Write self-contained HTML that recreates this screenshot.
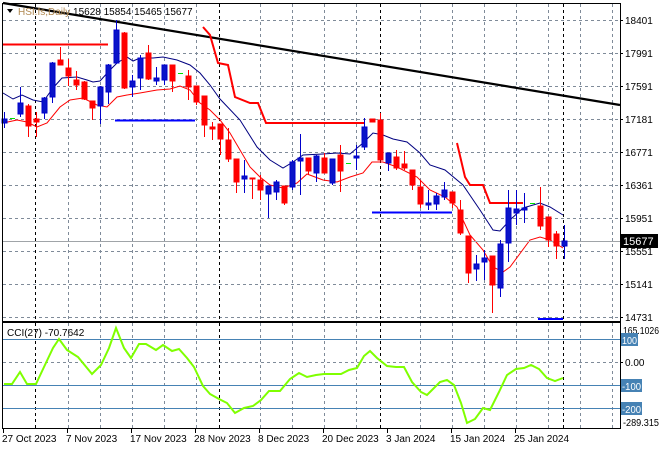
<!DOCTYPE html>
<html><head><meta charset="utf-8"><style>
html,body{margin:0;padding:0;background:#fff;}
svg{display:block;font-family:"Liberation Sans",Tahoma,sans-serif;}
</style></head><body>
<svg width="660" height="450" viewBox="0 0 660 450" xmlns="http://www.w3.org/2000/svg">
<rect width="660" height="450" fill="#fff"/>
<g stroke="#7f8b99" stroke-width="1" stroke-dasharray="3,3" fill="none">
<path d="M3 20.5H620M3 53.5H620M3 86.5H620M3 119.5H620M3 152.5H620M3 185.5H620M3 218.5H620M3 251.5H620M3 284.5H620M3 317.5H620"/>
<path d="M68.5 4V321M100.5 4V321M132.5 4V321M164.5 4V321M196.5 4V321M260.5 4V321M292.5 4V321M324.5 4V321M356.5 4V321M420.5 4V321M452.5 4V321M484.5 4V321M516.5 4V321M548.5 4V321M580.5 4V321M612.5 4V321"/>
<path d="M68.5 323V428M100.5 323V428M132.5 323V428M164.5 323V428M196.5 323V428M260.5 323V428M292.5 323V428M324.5 323V428M356.5 323V428M420.5 323V428M452.5 323V428M484.5 323V428M516.5 323V428M548.5 323V428M580.5 323V428M612.5 323V428"/>
<path d="M3 362.5H620"/>
</g>
<g stroke="#000" stroke-width="1" stroke-dasharray="3,3">
<path d="M35.5 4V321M219.5 4V321M380.5 4V321M563.5 4V321M35.5 323V428M219.5 323V428M380.5 323V428M563.5 323V428"/>
</g>
<path d="M3 3L620 105" stroke="#000" stroke-width="2.2"/>
<path d="M3 44.5H108" stroke="#ff0000" stroke-width="2"/>
<path d="M115 120.5H195M372 212.5H452M538 319H563" stroke="#0000ff" stroke-width="2"/>
<path d="M203 27L210 35L218 63L228 65L235 97L250 103L258 103L266 123L365 123" stroke="#ff0000" stroke-width="2" fill="none"/>
<path d="M457 143L465 177L470 185L483 185L490 203L523 203" stroke="#ff0000" stroke-width="2" fill="none"/>
<polyline fill="none" stroke="#000080" stroke-width="1" points="3,93 13,99 22,95 33,100 43,102 53,88 62,78 77,77 87,80 93,82 100,81 110,70 117,63 127,57 133,61 140,58 153,58 163,57 177,60 190,65 200,73 210,85 220,99 240,120 257,147 270,160 283,168 293,162 303,155 323,154 337,153 350,154 363,143 373,133 383,135 393,139 407,142 420,153 430,165 445,170 463,185 480,210 493,230 500,231 510,220 523,208 540,203 550,207 563,215"/>
<polyline fill="none" stroke="#ff0000" stroke-width="1" points="3,123 17,120 27,122 37,127 47,123 60,107 70,100 83,98 97,105 107,107 117,97 127,95 140,93 157,90 170,89 180,86 190,90 200,103 210,110 220,120 230,133 240,150 250,167 260,177 270,185 283,188 297,183 307,174 323,180 337,182 350,177 363,173 372,162 383,162 397,167 417,177 430,190 445,197 457,207 470,235 483,250 493,267 503,272 510,267 530,240 540,237 550,240 563,248"/>
<path d="M3 241.5H620" stroke="#a0a4a8" stroke-width="1"/>
<g stroke-width="1">
<g stroke="#0000cc" fill="#0a14c8">
<path d="M4.5 112V128M20.5 87V117M44.5 97V119M52.5 62V103M100.5 86V124M108.5 64V104M116.5 20V64M132.5 75V97M140.5 55V90M156.5 67V85M164.5 65V85M244.5 160V193M268.5 186V218M276.5 180V200M292.5 160V190M300.5 134V195M316.5 155V182M332.5 160V185M356.5 145V170M364.5 118V150M388.5 153V171M428.5 190V210M436.5 193V210M444.5 182V200M476.5 255V281M484.5 250V280M500.5 240V297M508.5 190V262M516.5 190V225M524.5 193V223M564.5 225V259"/>
<rect x="2" y="119" width="5" height="4"/><rect x="18" y="103" width="5" height="11"/><rect x="42" y="98" width="5" height="15"/><rect x="50" y="63" width="5" height="34"/><rect x="98" y="87" width="5" height="19"/><rect x="106" y="65" width="5" height="27"/><rect x="114" y="30" width="5" height="33"/><rect x="130" y="81" width="5" height="6"/><rect x="138" y="58" width="5" height="20"/><rect x="154" y="78" width="5" height="3"/><rect x="162" y="65" width="5" height="15"/><rect x="242" y="176" width="5" height="3"/><rect x="266" y="186" width="5" height="8"/><rect x="274" y="182" width="5" height="10"/><rect x="290" y="162" width="5" height="25"/><rect x="298" y="158" width="5" height="3"/><rect x="314" y="156" width="5" height="17"/><rect x="330" y="159" width="5" height="24"/><rect x="354" y="156" width="5" height="2"/><rect x="362" y="127" width="5" height="20"/><rect x="386" y="153" width="5" height="10"/><rect x="426" y="203" width="5" height="2"/><rect x="434" y="196" width="5" height="8"/><rect x="442" y="190" width="5" height="7"/><rect x="474" y="264" width="5" height="5"/><rect x="482" y="258" width="5" height="4"/><rect x="498" y="244" width="5" height="44"/><rect x="506" y="208" width="5" height="35"/><rect x="514" y="209" width="5" height="4"/><rect x="522" y="208" width="5" height="2"/><rect x="562" y="241" width="5" height="5"/>
</g>
<g stroke="#ff0000" fill="#ff0000">
<path d="M28.5 104V137M36.5 112V137M60.5 47V65M68.5 59V86M76.5 71V90M84.5 81V100M92.5 101V120M124.5 32V89M148.5 45V80M172.5 65V92M188.5 70V100M196.5 86V105M204.5 96V137M212.5 122V140M220.5 124V155M228.5 128V162M236.5 159V193M252.5 178V199M260.5 175V200M284.5 186V205M308.5 158V175M324.5 153V173M340.5 145V192M372.5 119V122M380.5 113V160M396.5 150V170M404.5 151V170M412.5 170V190M420.5 180V208M452.5 192V208M460.5 200V235M468.5 236V283M492.5 256V313M540.5 187V230M548.5 217V247M556.5 231V259"/>
<rect x="26" y="106" width="5" height="20"/><rect x="34" y="119" width="5" height="3"/><rect x="58" y="60" width="5" height="5"/><rect x="66" y="68" width="5" height="8"/><rect x="74" y="80" width="5" height="5"/><rect x="82" y="82" width="5" height="17"/><rect x="90" y="101" width="5" height="7"/><rect x="122" y="33" width="5" height="55"/><rect x="146" y="53" width="5" height="26"/><rect x="170" y="65" width="5" height="16"/><rect x="186" y="76" width="5" height="11"/><rect x="194" y="86" width="5" height="16"/><rect x="202" y="96" width="5" height="29"/><rect x="210" y="127" width="5" height="2"/><rect x="218" y="124" width="5" height="15"/><rect x="226" y="140" width="5" height="19"/><rect x="234" y="159" width="5" height="23"/><rect x="250" y="178" width="5" height="1"/><rect x="258" y="180" width="5" height="10"/><rect x="282" y="186" width="5" height="17"/><rect x="306" y="158" width="5" height="13"/><rect x="322" y="158" width="5" height="15"/><rect x="338" y="155" width="5" height="16"/><rect x="370" y="119" width="5" height="3"/><rect x="378" y="120" width="5" height="40"/><rect x="394" y="157" width="5" height="11"/><rect x="402" y="164" width="5" height="4"/><rect x="410" y="170" width="5" height="15"/><rect x="418" y="187" width="5" height="17"/><rect x="450" y="192" width="5" height="11"/><rect x="458" y="210" width="5" height="23"/><rect x="466" y="236" width="5" height="37"/><rect x="490" y="256" width="5" height="29"/><rect x="538" y="206" width="5" height="20"/><rect x="546" y="217" width="5" height="23"/><rect x="554" y="234" width="5" height="12"/>
</g>
<path d="M10 118.5H15M178 73.5H183M346 163.5H351M530 203.5H535" stroke="#00e000" stroke-width="1"/>
</g>
<path d="M3 339.5H620M3 385.5H620M3 408.5H620" stroke="#4682b4" stroke-width="1"/>
<polyline fill="none" stroke="#7fff00" stroke-width="2" points="4,384 12,384 20,372 27,384 36,384 44,367 53,348 59,339 67,350 78,357 92,374 101,365 109,348 116,328 124,348 131,358 139,344 146,344 156,350 163,345 172,351 179,349 187,358 194,367 203,386 210,394 219,399 227,403 235,413 244,408 253,406 261,400 269,391 280,391 290,379 299,373 307,377 316,375 324,374 341,374 349,370 357,368 364,356 370,351 377,358 387,366 396,367 404,367 412,382 421,392 427,395 440,382 447,380 454,385 461,403 467,423 475,419 483,408 490,410 499,392 507,375 516,369 524,368 531,365 539,369 547,378 555,381 563,378"/>
<rect x="2.5" y="3.5" width="618" height="318" fill="none" stroke="#000" stroke-width="1"/>
<rect x="2.5" y="322.5" width="618" height="106" fill="none" stroke="#000" stroke-width="1"/>
<path d="M7 9H13L10 13Z" fill="#000"/>
<text x="18" y="15" font-size="10"><tspan fill="#b08850">HSI.fs,Daily</tspan><tspan fill="#000">  15628 15854 15465 15677</tspan></text>
<text x="7" y="336" font-size="10" fill="#000">CCI(27) -70.7642</text>
<g font-size="10" fill="#000">
<path d="M620 20.5h3M620 53.5h3M620 86.5h3M620 119.5h3M620 152.5h3M620 185.5h3M620 218.5h3M620 251.5h3M620 284.5h3M620 317.5h3M620 362.5h3" stroke="#000"/>
<text x="625" y="24">18401</text><text x="625" y="57">17991</text><text x="625" y="90">17591</text><text x="625" y="123">17181</text><text x="625" y="156">16771</text><text x="625" y="189">16361</text><text x="625" y="222">15951</text><text x="625" y="255">15551</text><text x="625" y="288">15141</text><text x="625" y="321">14731</text>
<rect x="620" y="234" width="38" height="14" fill="#000"/><text x="623" y="245" fill="#fff" font-size="11">15677</text>
<text x="623" y="334" textLength="36" lengthAdjust="spacingAndGlyphs">165.1026</text>
<rect x="621" y="333" width="17" height="13" fill="#4682b4"/><text x="622" y="344" fill="#fff" textLength="15" lengthAdjust="spacingAndGlyphs">100</text>
<text x="625" y="366">0.00</text>
<rect x="621" y="379" width="21" height="13" fill="#4682b4"/><text x="622" y="390" fill="#fff" textLength="19" lengthAdjust="spacingAndGlyphs">-100</text>
<rect x="621" y="402" width="21" height="13" fill="#4682b4"/><text x="622" y="413" fill="#fff" textLength="19" lengthAdjust="spacingAndGlyphs">-200</text>
<text x="623" y="426" textLength="36" lengthAdjust="spacingAndGlyphs">-289.315</text>
</g>
<g font-size="10" fill="#000">
<path d="M3.5 429v4M67.5 429v4M131.5 429v4M195.5 429v4M259.5 429v4M323.5 429v4M387.5 429v4M451.5 429v4M515.5 429v4" stroke="#000"/>
<text x="2" y="442">27 Oct 2023</text><text x="66" y="442">7 Nov 2023</text><text x="130" y="442">17 Nov 2023</text><text x="194" y="442">28 Nov 2023</text><text x="258" y="442">8 Dec 2023</text><text x="322" y="442">20 Dec 2023</text><text x="386" y="442">3 Jan 2024</text><text x="450" y="442">15 Jan 2024</text><text x="514" y="442">25 Jan 2024</text>
</g>
</svg>
</body></html>
